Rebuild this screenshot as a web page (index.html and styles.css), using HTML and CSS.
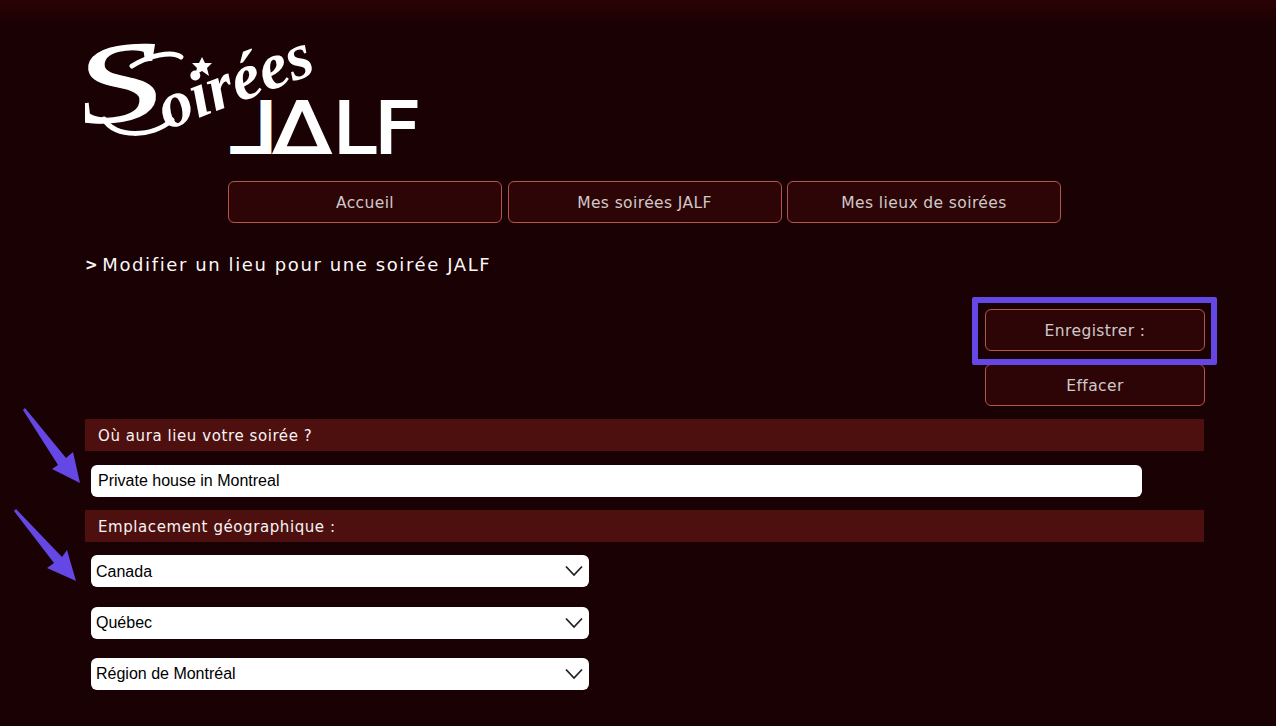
FILE: index.html
```html
<!DOCTYPE html>
<html lang="fr">
<head>
<meta charset="utf-8">
<title>Soirées JALF</title>
<link rel="stylesheet" href="styles.css">
</head>
<body>
<div class="page">
  <svg class="logo" viewBox="85 30 340 135" width="340" height="135" role="img" aria-label="Soirées JALF">
    <path class="logo-swash" d="M132 66C148 56 172 50 181 57M104 119C114 138 152 138 172 120"/>
    <text class="logo-s" transform="translate(78 125) rotate(-6) scale(1.55 1)">S</text>
    <text class="logo-script" transform="translate(167 130) rotate(-21)">oirées</text>
    <polygon class="logo-star" points="202,57 205,63 212,63 207,68 209,76 202,71 195,75 197,68 192,63 199,63"/>
    <text class="logo-jalf" transform="translate(278.5 153) scale(-1.2 1)">L</text>
    <text class="logo-jalf" transform="translate(273 153) scale(1.2 1)">Δ</text>
    <text class="logo-jalf" transform="translate(333 153) scale(1.08 1)">L</text>
    <text class="logo-jalf" transform="translate(374 153) scale(1.15 1)">F</text>
  </svg>

  <nav class="nav">
    <a class="btn nav-btn">Accueil</a>
    <a class="btn nav-btn">Mes soirées JALF</a>
    <a class="btn nav-btn">Mes lieux de soirées</a>
  </nav>

  <h1 class="title"><span class="prompt">&gt;</span> Modifier un lieu pour une soirée JALF</h1>

  <div class="actions">
    <button class="btn action-btn" type="button">Enregistrer :</button>
    <button class="btn action-btn" type="button">Effacer</button>
  </div>

  <h2 class="section">Où aura lieu votre soirée ?</h2>
  <input class="text-input" type="text" value="Private house in Montreal">

  <h2 class="section">Emplacement géographique :</h2>
  <div class="select-wrap first">
    <select class="select"><option>Canada</option></select>
    <svg class="chevron" viewBox="0 0 18 12" width="18" height="12"><path d="M1 1.5 9 10 17 1.5"/></svg>
  </div>
  <div class="select-wrap second">
    <select class="select"><option>Québec</option></select>
    <svg class="chevron" viewBox="0 0 18 12" width="18" height="12"><path d="M1 1.5 9 10 17 1.5"/></svg>
  </div>
  <div class="select-wrap third">
    <select class="select"><option>Région de Montréal</option></select>
    <svg class="chevron" viewBox="0 0 18 12" width="18" height="12"><path d="M1 1.5 9 10 17 1.5"/></svg>
  </div>

  <div class="highlight"></div>
  <svg class="arrow arrow-one" viewBox="20 405 64 82" width="64" height="82"><polygon points="23,410 25,408 66,458 73,452 80,483 52,469 58,465"/></svg>
  <svg class="arrow arrow-two" viewBox="12 506 68 80" width="68" height="80"><polygon points="14,511 16,509 62,557 67,550 76,581 47,568 54,563"/></svg>
</div>
</body>
</html>
```
FILE: styles.css
```css
* { box-sizing: border-box; }

html, body { margin: 0; height: 100%; }

body {
  background: linear-gradient(#2a0204 0, #1a0103 26px) #1a0103;
  font-family: "DejaVu Sans", Verdana, sans-serif;
  overflow: hidden;
}

.page {
  position: relative;
  padding: 30px 0 0 85px;
  width: 1205px;
  height: 726px;
}

.logo { display: block; }
.logo text { fill: #fff; }
.logo-s { font: italic 400 112px "Liberation Serif", serif; stroke: #fff; stroke-width: 1.2; }
.logo-script { font: italic 700 66px "Liberation Serif", serif; }
.logo-star { fill: #fff; }
.logo-swash { fill: none; stroke: #fff; stroke-width: 5; stroke-linecap: round; }
.logo-jalf { font: 400 71px "DejaVu Sans", sans-serif; stroke: #fff; stroke-width: 2; }

.nav {
  display: flex;
  justify-content: center;
  gap: 5.5px;
  margin-top: 16px;
  padding-right: 1px;
}

.btn {
  display: flex;
  align-items: center;
  justify-content: center;
  height: 42px;
  padding: 1px 0 0;
  background: #2e0507;
  border: 1px solid #b3544f;
  border-radius: 6px;
  color: #cfc9c9;
  font-family: inherit;
  font-size: 15.5px;
  letter-spacing: 0.4px;
}

.nav-btn { width: 274px; }

.title {
  margin: 30px 0 0;
  height: 22px;
  color: #fbf8f8;
  font-size: 18px;
  font-weight: 400;
  line-height: 24px;
  letter-spacing: 1.6px;
}

.prompt {
  display: inline-block;
  width: 10px;
  font-size: 15px;
  font-weight: 700;
  letter-spacing: 0;
  transform: translateY(-1px);
}

.actions {
  display: flex;
  flex-direction: column;
  align-items: flex-end;
  gap: 13px;
  margin-top: 34px;
}

.action-btn { width: 220px; }

.section {
  height: 32px;
  margin: 13px 1px 0 0;
  padding-left: 13px;
  background: #4d100f;
  color: #f8f3f3;
  font-size: 15px;
  font-weight: 400;
  line-height: 34px;
  letter-spacing: 0.58px;
}

.text-input,
.select {
  display: block;
  height: 32px;
  border: 0;
  border-radius: 6px;
  background: #fff;
  color: #000;
  font-family: "Liberation Sans", Arial, sans-serif;
  font-size: 16px;
  outline: 0;
}

.text-input {
  width: 1051px;
  margin: 14px 0 0 6px;
  padding: 0 7px;
}

.select-wrap {
  position: relative;
  width: 498px;
  margin-left: 6px;
}
.select-wrap.first { margin-top: 13px; }
.select-wrap.second { margin-top: 20px; }
.select-wrap.third { margin-top: 19px; }

.select {
  width: 100%;
  padding: 0 30px 0 5px;
  appearance: none;
  -webkit-appearance: none;
}

.second .select,
.third .select { padding-bottom: 2px; }

.chevron {
  position: absolute;
  top: 10px;
  right: 6px;
  fill: none;
  stroke: #222;
  stroke-width: 1.8;
}

.highlight {
  position: absolute;
  left: 972px;
  top: 297px;
  width: 245px;
  height: 68px;
  border: 6px solid #6547e6;
  border-radius: 2px;
}

.arrow { position: absolute; fill: #6547e6; }
.arrow-one { left: 20px; top: 405px; }
.arrow-two { left: 12px; top: 506px; }
```
